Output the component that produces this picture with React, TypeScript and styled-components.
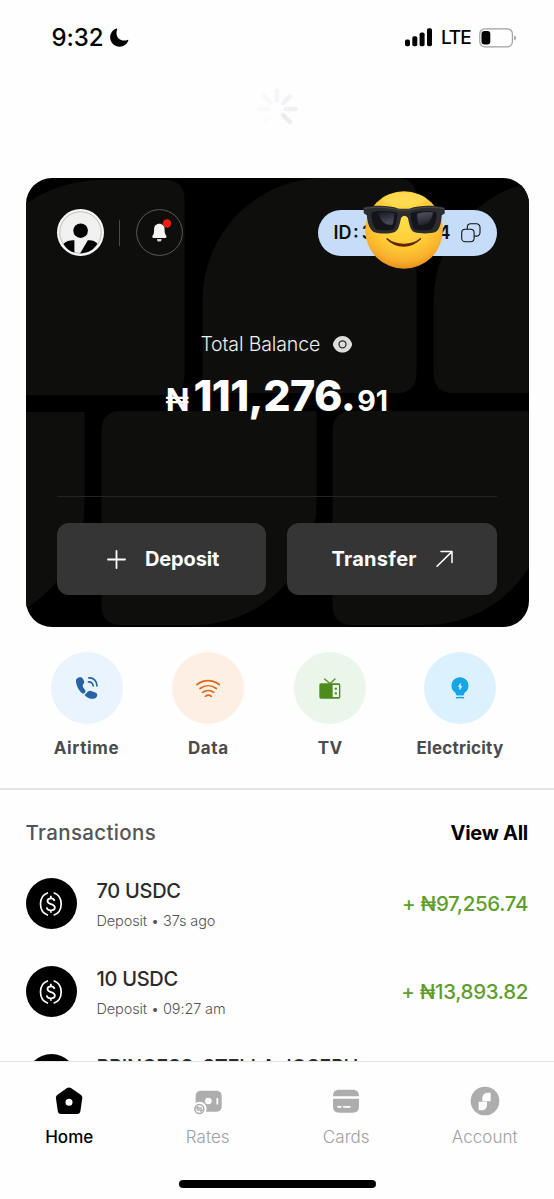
import React from 'react';
import styled, { createGlobalStyle } from 'styled-components';

const GlobalStyle = createGlobalStyle`
  * { box-sizing: border-box; }
  html, body { margin: 0; padding: 0; background: #fefefe; }
  body { font-family: Inter, "Liberation Sans", sans-serif; color: #000; }
  svg { display: block; flex: none; }
`;

const Screen = styled.div`
  width: 554px;
  height: 1199px;
  display: flex;
  flex-direction: column;
  overflow: hidden;
  background: #fefefe;
`;

const Label = styled.span<{ $size: number; $weight?: number; $track?: number; $color?: string; $line?: number }>`
  font-size: ${(p) => p.$size}px;
  font-weight: ${(p) => p.$weight ?? 400};
  letter-spacing: ${(p) => p.$track ?? 0}px;
  color: ${(p) => p.$color ?? 'inherit'};
  line-height: ${(p) => p.$line ?? 24}px;
  white-space: nowrap;
`;

const StatusBar = styled.header`
  height: 74px;
  flex: none;
  display: flex;
  align-items: center;
  justify-content: space-between;
  padding: 1px 37.5px 0 51.5px;
`;

const Cluster = styled.div<{ $gap: number }>`
  display: flex;
  align-items: center;
  gap: ${(p) => p.$gap}px;
`;

const Content = styled.main`
  flex: 1;
  min-height: 0;
  overflow: hidden;
`;

const Refresh = styled.div`
  height: 104px;
  display: flex;
  justify-content: center;
  padding-top: 14px;
`;

const BalanceCard = styled.section`
  position: relative;
  width: 503px;
  height: 448.5px;
  margin-left: 25.5px;
  padding: 31px 31.5px 0 31px;
  border-radius: 26px;
  overflow: hidden;
  background: #000;
  color: #fff;
`;

const Pattern = styled.svg`
  position: absolute;
  inset: 0;
`;

const CardBody = styled.div`
  position: relative;
  display: flex;
  flex-direction: column;
`;

const CardTop = styled.div`
  display: flex;
  justify-content: space-between;
  align-items: center;
  height: 47px;
`;

const Rule = styled.i`
  width: 1px;
  height: 26px;
  margin: 0 16px 0 15.5px;
  background: #4a4a49;
`;

const Profile = styled.div`
  display: flex;
  align-items: center;
`;

const IdPill = styled.div`
  position: relative;
  width: 179px;
  height: 46px;
  padding: 0 16px 0 15.5px;
  display: flex;
  align-items: center;
  border-radius: 23px;
  background: #c5ddf8;
  color: #111;
`;

const IdTail = styled.span`
  display: flex;
  align-items: center;
  gap: 10.5px;
  margin-left: auto;
`;

const EmojiSticker = styled.svg`
  position: absolute;
  left: 44px;
  top: -20px;
`;

const BalanceTitle = styled.div`
  display: flex;
  align-items: center;
  justify-content: center;
  gap: 13px;
  margin-top: 76px;
  height: 24px;
`;

const Balance = styled.div`
  display: flex;
  align-items: baseline;
  justify-content: center;
  margin-top: 14px;
  height: 50px;
`;

const Whole = styled.span`
  margin: 0 2px 0 4.5px;
`;

const CardActions = styled.div`
  display: grid;
  grid-template-columns: 1fr 1fr;
  gap: 21px;
  margin-top: 76px;
  padding-top: 26px;
  border-top: 1px solid #242423;
`;

const ActionButton = styled.button<{ $shift?: number }>`
  height: 72px;
  padding: 0 0 0 ${(p) => p.$shift ?? 0}px;
  border: 0;
  border-radius: 12px;
  background: #353535;
  color: #fff;
  font-family: inherit;
  display: flex;
  align-items: center;
  justify-content: center;
  gap: 19px;
`;

const Services = styled.section`
  display: flex;
  justify-content: space-between;
  padding: 25.5px 50px 0 50.5px;
  height: 161.5px;
`;

const Service = styled.div<{ $wide?: boolean }>`
  width: ${(p) => (p.$wide ? 88 : 72)}px;
  display: flex;
  flex-direction: column;
  align-items: center;
  gap: 11.5px;
`;

const ServiceIcon = styled.div<{ $bg: string }>`
  width: 72px;
  height: 72px;
  border-radius: 50%;
  background: ${(p) => p.$bg};
  display: flex;
  align-items: center;
  justify-content: center;
`;

const Transactions = styled.section`
  border-top: 2px solid #e6e6e6;
  padding: 28.5px 26px 0 25.5px;
`;

const SectionHeader = styled.div`
  display: flex;
  justify-content: space-between;
  height: 28px;
  margin-bottom: 31.5px;
`;

const TransactionRow = styled.div`
  height: 88px;
  display: flex;
  align-items: flex-start;
`;

const Coin = styled.div`
  width: 51px;
  height: 51px;
  flex: none;
  margin-right: 20px;
  border-radius: 50%;
  background: #000;
  display: flex;
  align-items: center;
  justify-content: center;
`;

const Details = styled.div`
  flex: 1;
  display: flex;
  flex-direction: column;
  gap: 8px;
  padding-top: 1px;
`;

const Amount = styled.div`
  height: 51px;
  display: flex;
  align-items: center;
`;

const TabBar = styled.nav`
  flex: none;
  height: 138px;
  border-top: 1px solid #e4e4e4;
  background: #fefefe;
  display: flex;
  flex-direction: column;
  align-items: center;
`;

const Tabs = styled.div`
  width: 100%;
  height: 118px;
  padding-top: 24px;
  display: grid;
  grid-template-columns: repeat(4, 1fr);
`;

const Tab = styled.div`
  display: flex;
  flex-direction: column;
  align-items: center;
  gap: 9px;
`;

const TabIcon = styled.div`
  height: 30px;
  display: flex;
  align-items: center;
`;

const HomeIndicator = styled.div`
  width: 197px;
  height: 7.5px;
  border-radius: 4px;
  background: #000;
`;

const Moon = () => (
  <svg width="19" height="20" viewBox="0 0 19 20">
    <path d="M6.400.5C-.8 3.400-1.600 11.500 3 16c4.500 4.400 12.900 3.400 15.300-3.400.2-.6-.2-.9-.7-.7C9.800 14.300 4.500 8.300 7.200 1.200c.2-.5-.2-.9-.8-.7z" />
  </svg>
);

const Signal = () => (
  <svg width="28" height="19" viewBox="0 0 28 19">
    <rect x="0" y="11.500" width="5" height="6.800" rx="1.800" />
    <rect x="7.300" y="8.300" width="5" height="10" rx="1.800" />
    <rect x="14.600" y="4.500" width="5" height="13.800" rx="1.800" />
    <rect x="22" y=".3" width="5" height="18" rx="1.800" />
  </svg>
);

const Battery = () => (
  <svg width="38" height="20" viewBox="0 0 38 20">
    <rect x=".8" y=".8" width="32.600" height="18" rx="5" fill="none" stroke="#a0a0a0" strokeWidth="1.200" />
    <rect x="2.500" y="3" width="8.800" height="13.400" rx="3" />
    <path d="M35.200 7.400c2.300.8 2.300 4 0 4.800z" fill="#999" />
  </svg>
);

const bladeOpacity = [0.5, 0.6, 0.75, 1, 0, 0.1, 0.22, 0.32];

const Spinner = () => (
  <svg width="42" height="42" viewBox="-21 -21 42 42">
    {bladeOpacity.map((opacity, i) => (
      <rect key={i} x="-2.300" y="-20.500" width="4.600" height="14" rx="2.300" fill="#ebebf2" opacity={opacity} transform={`rotate(${i * 45})`} />
    ))}
  </svg>
);

const Avatar = () => (
  <svg width="47" height="47" viewBox="0 0 47 47">
    <circle cx="23.500" cy="23.500" r="23.500" fill="#f7f7f7" />
    <circle cx="23.500" cy="23.500" r="20.800" fill="#f0f0f0" stroke="#999" strokeWidth=".6" />
    <circle cx="23.600" cy="21.700" r="7.300" />
    <path d="M6.500 34.800c2.600-2.600 6.200-3.600 10.900-3.500v12.300c-5-1.200-8.800-4.600-10.900-8.800zM30.800 31.300c3.900-.4 7.200.6 9.600 3.300-3.300 6-9 9.700-17.300 9.800z" />
  </svg>
);

const Bell = () => (
  <svg width="47" height="47" viewBox="0 0 47 47">
    <circle cx="23.500" cy="23.500" r="22.900" fill="none" stroke="#5a5a59" />
    <path d="M23.300 14.800c-3.200 0-5.200 2.300-5.200 5.400 0 3.500-.3 4.800-1.400 6.200-.9 1.200-.4 2.600 1 2.600h11.400c1.400 0 1.900-1.400 1-2.600-1.200-1.500-1.500-2.800-1.500-6.200 0-3.100-2.100-5.400-5.300-5.400z" fill="#f5f5f5" />
    <path d="M21 29.900h4.500v1c0 2-4.500 2-4.500 0z" fill="#ccc" />
    <circle cx="31" cy="14.500" r="4.200" fill="#ef1d10" />
  </svg>
);

const Copy = () => (
  <svg width="20" height="20" viewBox="0 0 20 20" fill="none" stroke="#111" strokeWidth="1.100">
    <rect x=".7" y="6.300" width="12.400" height="12.400" rx="3.500" />
    <path d="M6.300 6V4.300A3.500 3.500 0 0 1 9.800.8h5.700A3.500 3.500 0 0 1 19 4.300v5.300a3.500 3.500 0 0 1-3.500 3.500h-2.200" />
  </svg>
);

const Emoji = () => (
  <EmojiSticker width="84" height="80" viewBox="0 0 84 80">
    <defs>
      <radialGradient id="face" cx=".5" cy=".33" r=".68">
        <stop offset="0" stopColor="#ffdf49" />
        <stop offset=".58" stopColor="#fdca35" />
        <stop offset=".84" stopColor="#f8b02c" />
        <stop offset="1" stopColor="#e78c1c" />
      </radialGradient>
      <linearGradient id="lens" x1="0" y1="0" x2="1" y2="1">
        <stop offset="0" stopColor="#171820" />
        <stop offset=".5" stopColor="#474957" />
        <stop offset="1" stopColor="#16171e" />
      </linearGradient>
    </defs>
    <circle cx="42" cy="40" r="38.800" fill="url(#face)" />
    <ellipse cx="42" cy="9" rx="22" ry="6.500" fill="#ffe568" opacity=".45" />
    <path d="M25 48.800c9 9.600 24 9.600 33.500 0-8 7.300-25 7.300-33.500 0z" fill="#5d260a" stroke="#5d260a" strokeWidth="1.300" strokeLinejoin="round" />
    <path d="M1.500 17.500c12-2.500 25-2.200 35.500 1.200h10c11-3.400 23-3.700 35.500-1.200l.3 5.800-3 2c-.8 8-2 14.500-6.300 16.800-6.500 2-15.500 1.900-21.300 0-4.200-1.800-5-8.800-6.200-13.800-1.500-3.500-5.500-3.500-7 0-1.200 5-2.200 12-6.200 13.700-6 2-14.500 2-21 0C7.500 39.500 5.500 33 4.800 25.300l-3-2z" fill="#2d2d30" />
    <path d="M9.500 22.500c7.500-2.200 18.500-1.800 26 .8-.4 5.200-1.500 13.200-4.200 15.900-4.500 1.700-12.500 1.500-16.800 0-3.700-3-5.500-11.400-5-16.700zM48.500 23.300c7.200-2.600 18-3 26-.8.4 5.300-1.300 13.700-5 16.700-4.600 1.500-12.200 1.700-16.800 0-2.800-2.700-4-10.700-4.200-15.900z" fill="#14151b" />
    <path d="M16 22.500c5.500-.8 11-.3 16.500 1l-1.500 11c-5.500 1.800-12-1.500-15-12zM55 23.500c5.500-1.500 10.500-1.800 16-1-1 9-8 15-15 12z" fill="url(#lens)" />
    <path d="M2 18.500c12-2 24-1.500 35 1.600h10c11-3.100 23-3.600 35-1.600" fill="none" stroke="#515154" strokeWidth=".9" />
  </EmojiSticker>
);

const Eye = () => (
  <svg width="20" height="17" viewBox="0 0 20 17">
    <path d="M9.500 0C4.800 0 1.900 3.200.5 6.300c-.7 1.500-.7 2.800 0 4.200C1.900 13.500 4.800 16.600 9.500 16.600s7.600-3.100 9-6.100c.7-1.400.7-2.700 0-4.200C17.100 3.200 14.200 0 9.500 0z" fill="#dededd" />
    <circle cx="9.500" cy="8.300" r="3.500" fill="none" stroke="#30302f" strokeWidth="1.300" />
  </svg>
);

const Plus = () => (
  <svg width="19" height="19" viewBox="0 0 19 19" fill="none" stroke="#fff" strokeWidth="1.800" strokeLinecap="round">
    <path d="M9.500 1v17M1 9.500h17" />
  </svg>
);

const Arrow = () => (
  <svg width="17" height="18" viewBox="0.500 0 17 18" fill="none" stroke="#fff" strokeWidth="1.500" strokeLinecap="round" strokeLinejoin="round">
    <path d="M1.500 16.300 16.500 1.600M5.500 1.500h11v11" />
  </svg>
);

const PhoneIcon = () => (
  <svg width="22" height="22" viewBox="168 112 66 66">
    <path d="M176 113.500c6-2 11-.5 13.500 5l3 7c2 5-5 8.500-4.500 13 .5 5 4.500 9 7.500 13 2 3 2 5-1 7.500-4 3.500-7.500 3.500-11-.5-9-9.500-14.500-21-15.500-33-.5-6 2-10 8-12zM195 164.500l6-6c3-3.500 7-6 12-4.500l13 4.500c5 2 6.500 6 5.500 10-1.500 6-6 8.500-12 9-9 .7-17-3-24.500-10-1-1-1-2 0-3z" fill="#2563a4" />
    <path d="M206 115c14-2 25 9 25 24M205 127c8-1 14 4.500 14.500 12" fill="none" stroke="#2563a4" strokeWidth="5" strokeLinecap="round" />
  </svg>
);

const WifiIcon = () => (
  <svg width="24" height="18.700" viewBox="529 117 72 56" fill="none" stroke="#d9691b" strokeWidth="5" strokeLinecap="round">
    <path d="M532 134c20-16 46-16 67 0M541 145.500c15-11 34-11 49 0M549 157c9-7.500 24-7.500 33 0M557 169c5-4 13-4 18 0" />
  </svg>
);

const TvIcon = () => (
  <svg width="22" height="21" viewBox="122 112 66 63">
    <path d="M139 115l16 14 15-14" fill="none" stroke="#4e8b1f" strokeWidth="4" strokeLinecap="round" />
    <rect x="123" y="128" width="63" height="46" rx="5" fill="#4e8b1f" />
    <path d="M163 133h19v36h-19z" fill="#eaf6e9" />
    <circle cx="172.500" cy="144" r="3.500" fill="#4e8b1f" />
    <circle cx="172.500" cy="158" r="3.500" fill="#4e8b1f" />
  </svg>
);

const BulbIcon = () => (
  <svg width="18" height="22" viewBox="514 112 54 66">
    <path d="M541 113c-14.500 0-25.500 11-25.500 25 0 9 4.500 15.500 10 20 2.300 2 2.500 4 3.500 7.500.5 1.500 1.300 2 3 2h18c1.700 0 2.500-.5 3-2 1-3.500 1.200-5.500 3.500-7.500 5.500-4.500 10-11 10-20 0-14-11-25-25.500-25z" fill="#17a5e8" />
    <path d="M542.500 131l-6.500 10h4.500l-.5 9.500 7-10.500h-5z" fill="#e2f5fe" stroke="#e2f5fe" strokeWidth="1.500" strokeLinejoin="round" />
    <path d="M530.500 174.500c7-1.500 14-1.500 21 0" fill="none" stroke="#17a5e8" strokeWidth="4.500" strokeLinecap="round" />
  </svg>
);

const UsdcIcon = () => (
  <svg width="24" height="24" viewBox="118 332 72 72" fill="none" stroke="#fff" strokeWidth="5">
    <path d="M145 334.500c-30 10-30 57 0 67M162 334.500c30 10 30 57 0 67" />
    <path d="M164.500 359c-1-6-5-8-10.500-8-6.500 0-10.500 3.300-10.500 8 0 12.500 22 5.500 22 19.500 0 5.500-4.500 8.500-11.500 8.500s-12-3.200-12.500-9M153.500 343.500v8M153.500 386.500v7.500" strokeWidth="5.400" />
  </svg>
);

const HomeIcon = () => (
  <svg width="28" height="28" viewBox="167 112 84 84">
    <path d="M203 115c4-2.500 8-2.500 12 0l29 20c4 3 5.500 6.500 4.800 11l-5.500 38c-.7 6-4 9-10 9h-48c-6 0-9.300-3-10-9l-5.500-38c-.7-4.500.8-8 4.800-11z" />
    <circle cx="209" cy="158" r="10.500" fill="#fff" />
  </svg>
);

const RatesIcon = () => (
  <svg width="28" height="28" viewBox="582 112 84 84">
    <rect x="587" y="123" width="78" height="63" rx="15" fill="#adadad" />
    <circle cx="625" cy="154" r="10" fill="#fefefe" />
    <path d="M652 147v15" stroke="#fefefe" strokeWidth="5.500" strokeLinecap="round" />
    <circle cx="599" cy="177" r="21" fill="#fefefe" />
    <circle cx="598" cy="178" r="13.500" fill="#fefefe" stroke="#adadad" strokeWidth="4.500" />
    <path d="M606 175h-17l6-5M590 181h17l-6 5" fill="none" stroke="#adadad" strokeWidth="3.800" />
  </svg>
);

const CardsIcon = () => (
  <svg width="28" height="28" viewBox="175 112 84 84">
    <path d="M178 140c0-14 6-20 19-20h40c13 0 19 6 19 20zM178 147h78v23c0 13-6 19-19 19h-40c-13 0-19-6-19-19z" fill="#adadad" />
    <path d="M193 171.500h9M210 171.500h19" stroke="#fefefe" strokeWidth="5" strokeLinecap="round" />
  </svg>
);

const AccountIcon = () => (
  <svg width="30" height="30" viewBox="589 109 90 90">
    <circle cx="634" cy="154" r="43" fill="#adadad" />
    <path d="M626 155v-8c0-12 6-18 17-18h8v26zM615 156h25v9c0 11-7 17-17 17h-8z" fill="#fefefe" />
  </svg>
);

const services = [
  { name: 'Airtime', bg: '#eaf4fe', icon: <PhoneIcon />, track: 0.65 },
  { name: 'Data', bg: '#fdefe4', icon: <WifiIcon />, track: 0.6 },
  { name: 'TV', bg: '#eaf6e9', icon: <TvIcon />, track: 0.5 },
  { name: 'Electricity', bg: '#dbf2fe', icon: <BulbIcon />, track: 0.22, wide: true },
];

const transactions = [
  { title: '70 USDC', detail: 'Deposit • 37s ago', amount: '+ ₦97,256.74' },
  { title: '10 USDC', detail: 'Deposit • 09:27 am', amount: '+ ₦13,893.82' },
  { title: 'PRINCESS-STELLA JOSEPH', detail: '', amount: '' },
];

const tabs = [
  { name: 'Home', icon: <HomeIcon />, active: true },
  { name: 'Rates', icon: <RatesIcon /> },
  { name: 'Cards', icon: <CardsIcon /> },
  { name: 'Account', icon: <AccountIcon /> },
];

export default function App() {
  return (
    <Screen>
      <GlobalStyle />
      <StatusBar>
        <Cluster $gap={7}>
          <Label $size={24} $weight={500} $track={-0.1}>9:32</Label>
          <Moon />
        </Cluster>
        <Cluster $gap={8}>
          <Signal />
          <Label $size={19} $weight={500} $track={-1.1}>LTE</Label>
          <Battery />
        </Cluster>
      </StatusBar>
      <Content>
        <Refresh><Spinner /></Refresh>
        <BalanceCard>
          <Pattern width="503" height="449" viewBox="25.5 178 503 449" fill="#0e0e0c">
            <path d="M-31 312A132 132 0 0 1 101 180H164Q184 180 184 200V375Q184 395 164 395H-31z" />
            <path d="M202 300A122 122 0 0 1 324 178H396Q416 178 416 198V373Q416 393 396 393H222Q202 393 202 373z" />
            <path d="M433 300A122 122 0 0 1 555 180V393H453Q433 393 433 373z" />
            <path d="M0 412H84V505A120 120 0 0 1-36 625z" />
            <path d="M121 411H316V503A122 122 0 0 1 194 625H121Q101 625 101 605V431Q101 411 121 411z" />
            <path d="M352 411H547V503A122 122 0 0 1 425 625H352Q332 625 332 605V431Q332 411 352 411z" />
          </Pattern>
          <CardBody>
            <CardTop>
              <Profile>
                <Avatar />
                <Rule />
                <Bell />
              </Profile>
              <IdPill>
                <Label $size={18} $weight={600}>ID&#8202;:&#8202;&#8202;3</Label>
                <IdTail>
                  <Label $size={18} $weight={600}>4</Label>
                  <Copy />
                </IdTail>
                <Emoji />
              </IdPill>
            </CardTop>
            <BalanceTitle>
              <Label $size={19.5} $weight={300} $track={-0.13} $color="#efefee">Total Balance</Label>
              <Eye />
            </BalanceTitle>
            <Balance>
              <Label $size={31} $weight={700} $line={50}>₦</Label>
              <Whole><Label $size={43} $weight={800} $track={-0.6} $line={50}>111,276.</Label></Whole>
              <Label $size={28.5} $weight={700} $line={50}>91</Label>
            </Balance>
            <CardActions>
              <ActionButton $shift={3.5}>
                <Plus />
                <Label $size={20} $weight={700} $track={-0.15}>Deposit</Label>
              </ActionButton>
              <ActionButton>
                <Label $size={20} $weight={700} $track={0.3}>Transfer</Label>
                <Arrow />
              </ActionButton>
            </CardActions>
          </CardBody>
        </BalanceCard>
        <Services>
          {services.map((s) => (
            <Service key={s.name} $wide={s.wide}>
              <ServiceIcon $bg={s.bg}>{s.icon}</ServiceIcon>
              <Label $size={17} $weight={700} $track={s.track} $color="#4b4b4b">{s.name}</Label>
            </Service>
          ))}
        </Services>
        <Transactions>
          <SectionHeader>
            <Label $size={20.5} $weight={500} $track={0.35} $color="#555" $line={28}>Transactions</Label>
            <Label $size={20} $weight={700} $track={-0.25} $line={28}>View All</Label>
          </SectionHeader>
          {transactions.map((t) => (
            <TransactionRow key={t.title}>
              <Coin><UsdcIcon /></Coin>
              <Details>
                <Label $size={20} $weight={500} $track={-0.28} $color="#2b2b2b">{t.title}</Label>
                <Label $size={14.5} $weight={300} $track={-0.12} $color="#555" $line={20}>{t.detail}</Label>
              </Details>
              <Amount>
                <Label $size={20.5} $weight={500} $track={-0.35} $color="#5f9e2c">{t.amount}</Label>
              </Amount>
            </TransactionRow>
          ))}
        </Transactions>
      </Content>
      <TabBar>
        <Tabs>
          {tabs.map((t) => (
            <Tab key={t.name}>
              <TabIcon>{t.icon}</TabIcon>
              <Label $size={17} $weight={t.active ? 500 : 300} $track={0.05} $color={t.active ? '#000' : '#a0a0a0'}>{t.name}</Label>
            </Tab>
          ))}
        </Tabs>
        <HomeIndicator />
      </TabBar>
    </Screen>
  );
}
